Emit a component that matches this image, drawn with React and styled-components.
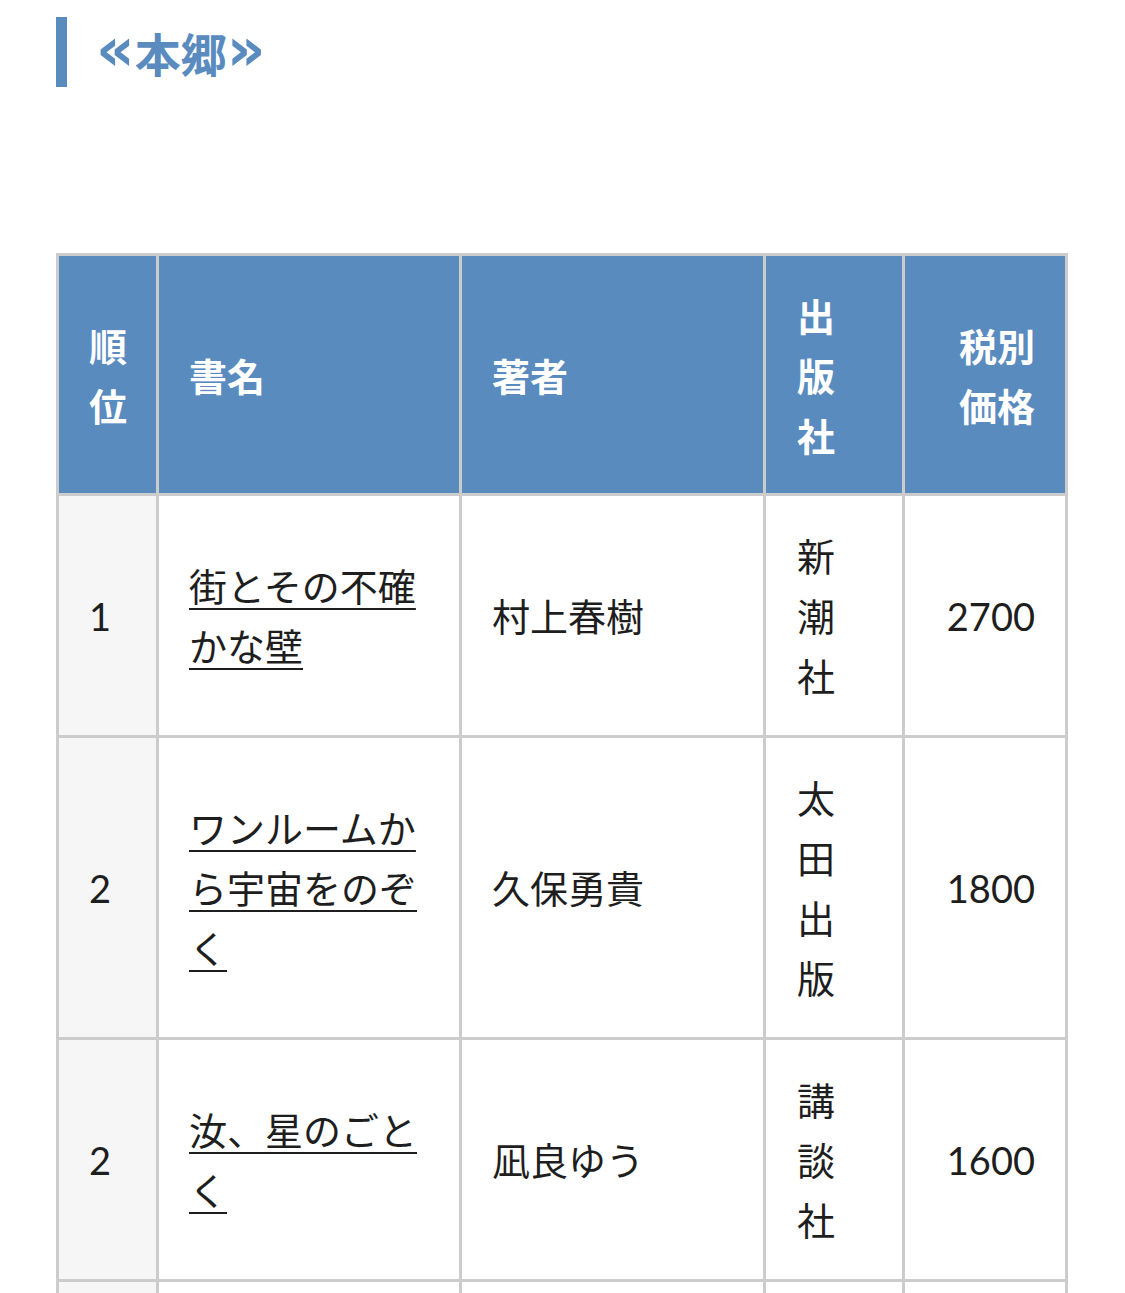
import React from "react";
import styled, { createGlobalStyle } from "styled-components";

const GlobalStyle = createGlobalStyle`
    body {
        margin: 0;
        background: #fff;
        font-family: Lato, "Noto Sans CJK JP", sans-serif;
        color: #1e1e1e;
    }
`;

const Page = styled.div`
    padding: 17px 57px 40px 56px;
`;

const Heading = styled.h2`
    margin: 0 0 166px 0;
    height: 70px;
    line-height: 70px;
    border-left: 11px solid #5a8bbf;
    padding-left: 29px;
    color: #5a8bbf;
    font-family: "Noto Sans CJK JP", sans-serif;
    font-weight: 700;
    font-size: 46px;
`;

const Quote = styled.span`
    font-family: "DejaVu Sans", sans-serif;
    font-weight: 700;
    font-size: 60px;
    line-height: 0;
    vertical-align: 2px;
`;

const Table = styled.table`
    width: 1012px;
    table-layout: fixed;
    border-collapse: collapse;
    font-size: 38px;
    line-height: 60px;
`;

const Th = styled.th`
    background: #5a8bbf;
    color: #fff;
    font-family: "Noto Sans CJK JP", sans-serif;
    font-weight: 700;
    border: 3px solid #ccc;
    padding: 28.5px ${(p) => p.$padX || 30}px;
    text-align: ${(p) => p.$align || "left"};
    vertical-align: middle;
`;

const Td = styled.td`
    background: ${(p) => (p.$muted ? "#f6f6f6" : "#fff")};
    border: 3px solid #ccc;
    padding: 30px ${(p) => p.$padX || 30}px 29px;
    text-align: ${(p) => p.$align || "left"};
    vertical-align: middle;
    word-break: break-all;
`;

const BookLink = styled.a`
    color: #1e1e1e;
    text-decoration: underline;
    text-decoration-thickness: 2px;
    text-underline-offset: 7px;
`;

const books = [
    { rank: 1, title: "街とその不確かな壁", author: "村上春樹", publisher: "新潮社", price: 2700 },
    { rank: 2, title: "ワンルームから宇宙をのぞく", author: "久保勇貴", publisher: "太田出版", price: 1800 },
    { rank: 2, title: "汝、星のごとく", author: "凪良ゆう", publisher: "講談社", price: 1600 },
    { rank: 4, title: "成瀬は天下を取りにいく", author: "宮島未奈", publisher: "新潮社", price: 1550 },
];

export default function App() {
    return (
        <Page>
            <GlobalStyle />
            <Heading>
                <Quote>«</Quote>本郷<Quote>»</Quote>
            </Heading>
            <Table>
                <colgroup>
                    <col style={{ width: 100 }} />
                    <col style={{ width: 303 }} />
                    <col style={{ width: 304 }} />
                    <col style={{ width: 139 }} />
                    <col style={{ width: 163 }} />
                </colgroup>
                <thead>
                    <tr>
                        <Th>順位</Th>
                        <Th>書名</Th>
                        <Th>著者</Th>
                        <Th $padX={31}>出版社</Th>
                        <Th $align="right">税別価格</Th>
                    </tr>
                </thead>
                <tbody>
                    {books.map((b, i) => (
                        <tr key={i}>
                            <Td $muted>{b.rank}</Td>
                            <Td>
                                <BookLink href="#">{b.title}</BookLink>
                            </Td>
                            <Td>{b.author}</Td>
                            <Td $padX={31}>{b.publisher}</Td>
                            <Td $align="right">{b.price}</Td>
                        </tr>
                    ))}
                </tbody>
            </Table>
        </Page>
    );
}
